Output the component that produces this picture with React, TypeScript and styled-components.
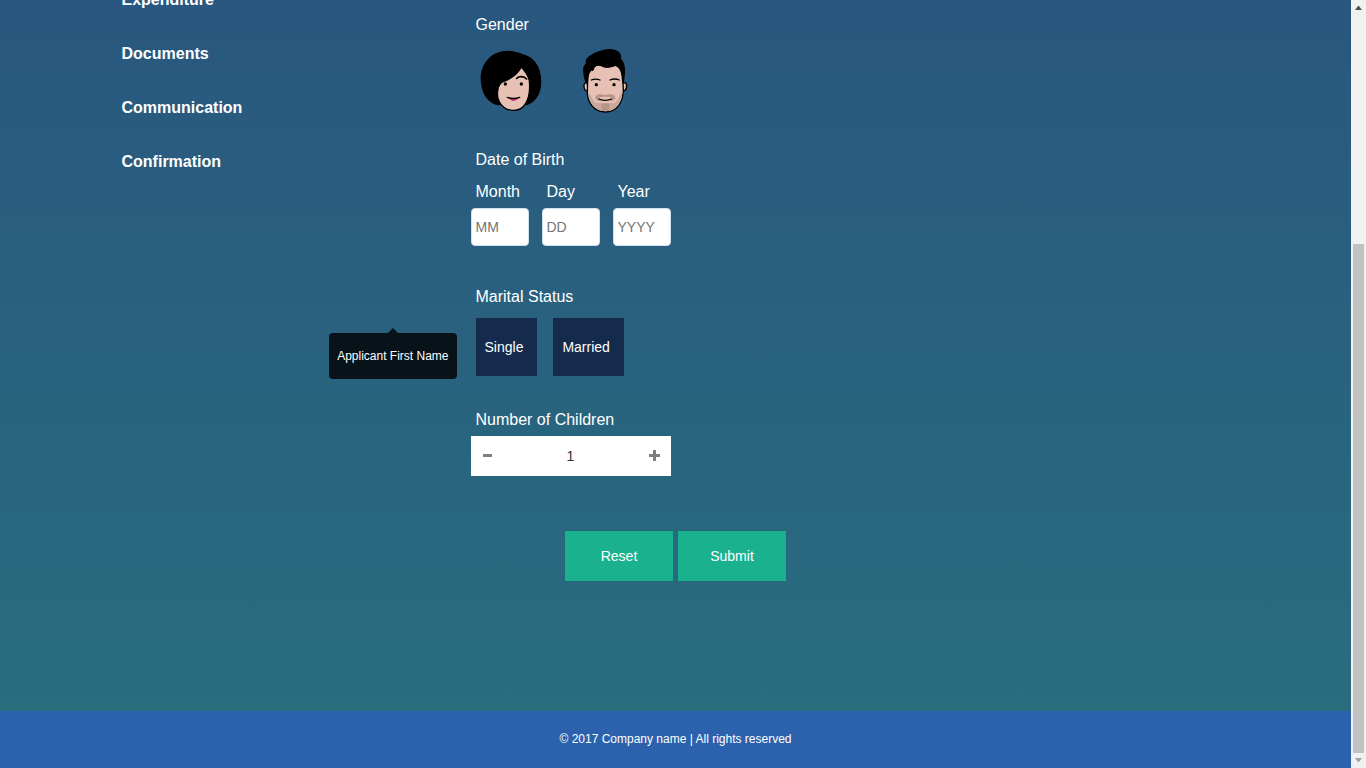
import React, { useState } from 'react';
import styled, { createGlobalStyle } from 'styled-components';

const GlobalStyle = createGlobalStyle`
  * { box-sizing: border-box; }
  body {
    margin: 0;
    overflow: hidden;
    font-family: "Liberation Sans", Arial, sans-serif;
    font-size: 14px;
    line-height: 20px;
    color: #fff;
  }
  button, input { font: inherit; }
`;

const Shell = styled.div`
  display: flex;
  height: 100vh;
`;

const Page = styled.div`
  flex: 1;
  display: flex;
  flex-direction: column;
  overflow: hidden;
  background: linear-gradient(#29577f, #296d7e 711px);
`;

const Main = styled.main`
  flex: 1;
`;

const Container = styled.div`
  display: flex;
  max-width: 1140px;
  margin: 0 auto;
`;

const Nav = styled.nav`
  width: 365px;
  padding-left: 16px;
  margin-top: -11px;
  display: flex;
  flex-direction: column;
  align-items: flex-start;
  gap: 32px;
`;

const NavLink = styled.a`
  color: #fff;
  font-size: 16px;
  font-weight: bold;
  line-height: 22px;
  text-decoration: none;
`;

const Form = styled.form`
  width: 200px;
  padding-top: 14px;
`;

const Group = styled.fieldset<{ $after?: number }>`
  position: relative;
  min-width: 0;
  margin: 0 0 ${(p) => p.$after ?? 0}px;
  padding: 0;
  border: 0;
`;

const Legend = styled.legend`
  padding: 0 5px;
  font-size: 16px;
  line-height: 22px;
`;

const Label = styled.label`
  display: block;
  padding: 0 5px;
  font-size: 16px;
  line-height: 22px;
`;

const Row = styled.div<{ $gap: number; $top: number; $inset?: boolean }>`
  display: flex;
  gap: ${(p) => p.$gap}px;
  margin-top: ${(p) => p.$top}px;
  padding-left: ${(p) => (p.$inset ? 5 : 0)}px;
`;

const HiddenRadio = styled.input`
  position: absolute;
  opacity: 0;
  width: 1px;
  height: 1px;
  margin: 0;
`;

const FaceChoice = styled.label`
  display: block;
  height: 72px;
  cursor: pointer;
  svg { display: block; width: 72px; height: 72px; }
`;

const DateField = styled.div`
  width: 58px;
`;

const DateInput = styled.input`
  display: block;
  width: 100%;
  height: 38px;
  margin-top: 5px;
  padding: 0 4px;
  border: 1px solid #cfe0ee;
  border-radius: 4px;
  background: #fff;
  color: #333;
  &::placeholder { color: #757575; }
`;

const StatusChoice = styled.label`
  padding: 19px 14px 19px 9px;
  background: #142b4d;
  cursor: pointer;
`;

const Tooltip = styled.div`
  position: absolute;
  top: 25px;
  right: calc(100% + 14px);
  padding: 13px 8px;
  border-radius: 4px;
  background: #071319;
  font-size: 12px;
  white-space: nowrap;
  &::before {
    content: "";
    position: absolute;
    left: 50%;
    bottom: 100%;
    margin-left: -5px;
    border: 5px solid transparent;
    border-top: 0;
    border-bottom-color: #071319;
  }
`;

const Stepper = styled.div`
  display: flex;
  align-items: center;
  height: 40px;
  margin-top: 5px;
  background: #fff;
`;

const StepButton = styled.button`
  display: flex;
  align-items: center;
  justify-content: center;
  width: 33px;
  height: 40px;
  padding: 0 0 2px;
  border: 0;
  background: none;
  color: #808080;
`;

const StepValue = styled.input`
  flex: 1;
  min-width: 0;
  height: 40px;
  padding: 0;
  border: 0;
  background: none;
  color: #333;
  text-align: center;
`;

const Actions = styled.div`
  display: flex;
  justify-content: center;
  gap: 5px;
  margin-top: 55px;
`;

const ActionButton = styled.button`
  width: 108px;
  height: 50px;
  border: 0;
  background: #1ab18f;
  color: #fff;
`;

const Footer = styled.footer`
  padding: 17px 0 18px;
  background: #2c62ad;
  font-size: 12px;
  line-height: 22px;
  text-align: center;
`;

const ScrollTrack = styled.div`
  display: flex;
  flex-direction: column;
  align-items: center;
  width: 15px;
  background: #f1f1f1;
`;

const ScrollArrow = styled.svg`
  display: block;
  width: 15px;
  height: 15px;
`;

const ScrollSpace = styled.div`
  flex: 229;
`;

const ScrollThumb = styled.div`
  flex: 509;
  width: 11px;
  background: #c1c1c1;
`;

const WomanFace = () => (
  <svg viewBox="3 0 216 216" aria-hidden="true">
    <path d="M96 17 C48 18 17 56 17 100 C17 142 38 178 72 181 L157 180 C185 170 199 142 199 110 C199 62 174 34 142 27 C128 20 112 17 96 17Z" fill="#000" />
    <path d="M139 66 C150 78 161 92 163 108 C166 138 162 162 149 180 C141 191 130 196 116 196 C100 196 87 190 78 178 C68 165 66 146 69 132 C71 120 76 113 86 109 C110 100 130 84 139 66Z" fill="#e7c2b4" stroke="#000" strokeWidth="4" />
    <path d="M125 100 C132 93 146 93 155 102" fill="none" stroke="#000" strokeWidth="5" strokeLinecap="round" />
    <circle cx="91" cy="117" r="5" />
    <circle cx="139" cy="117" r="5" />
    <path d="M101 159 Q115 160 130 159 Q124 168 115 168 Q106 167 101 159Z" fill="#d0246a" />
    <path d="M97 157 Q115 164 134 157" fill="none" stroke="#000" strokeWidth="4" strokeLinecap="round" />
  </svg>
);

const ManFace = () => (
  <svg viewBox="3 0 216 216" aria-hidden="true">
    <path d="M49 114 C39 110 39 138 53 138 M161 114 C173 108 173 137 159 138" fill="#e7c2b4" stroke="#000" strokeWidth="4" />
    <path d="M54 60 L156 60 L160 134 C159 174 139 201 106 201 C74 201 54 176 52 144Z" fill="#e7c2b4" stroke="#000" strokeWidth="4" />
    <path d="M55 142 C65 151 69 173 80 174 L132 174 C145 168 147 150 158 139 C155 176 138 198 106 199 C75 198 57 175 55 142Z" fill="#c9a99d" />
    <path d="M76 161 C77 145 91 146 105 150 C120 146 136 146 136 161 L127 168 L85 168Z" fill="#b79589" />
    <path d="M94 175 H118 V198 H94Z" fill="#b79589" />
    <path d="M84 158 Q105 153 127 158 Q105 173 84 158Z" fill="#e7c2b4" />
    <path d="M40 82 C37 68 43 61 48 55 C42 37 75 18 112 13 C137 9 158 23 153 41 C170 58 166 87 161 116 L156 111 C155 83 150 69 137 63 C119 69 108 72 91 63 C81 61 70 64 68 79 C64 72 55 85 54 113 L48 116 C44 103 40 96 40 82Z" fill="#000" />
    <path d="M78 62 Q71 67 69 77" fill="none" stroke="#000" strokeWidth="3" />
    <path d="M64 105 Q77 100 90 105 M120 105 Q134 99 148 105" fill="none" stroke="#000" strokeWidth="4" strokeLinecap="round" />
    <circle cx="79" cy="119" r="5" />
    <circle cx="132" cy="119" r="5" />
    <path d="M87 162 Q105 170 124 162" fill="none" stroke="#000" strokeWidth="4" strokeLinecap="round" />
  </svg>
);

const navItems = ['Expenditure', 'Documents', 'Communication', 'Confirmation'];
const dateParts = [
  { id: 'month', label: 'Month', hint: 'MM' },
  { id: 'day', label: 'Day', hint: 'DD' },
  { id: 'year', label: 'Year', hint: 'YYYY' },
];

export default function App() {
  const [children, setChildren] = useState(1);

  return (
    <Shell>
      <GlobalStyle />
      <Page>
        <Main>
          <Container>
            <Nav>
              {navItems.map((item) => (
                <NavLink key={item} href="#">{item}</NavLink>
              ))}
            </Nav>
            <Form id="applicant">
              <Group $after={32}>
                <Legend>Gender</Legend>
                <Row $gap={23} $top={9} $inset>
                  <FaceChoice>
                    <HiddenRadio type="radio" name="gender" aria-label="Female" />
                    <WomanFace />
                  </FaceChoice>
                  <FaceChoice>
                    <HiddenRadio type="radio" name="gender" aria-label="Male" />
                    <ManFace />
                  </FaceChoice>
                </Row>
              </Group>
              <Group $after={40}>
                <Legend>Date of Birth</Legend>
                <Row $gap={13} $top={10}>
                  {dateParts.map((part) => (
                    <DateField key={part.id}>
                      <Label htmlFor={part.id}>{part.label}</Label>
                      <DateInput id={part.id} placeholder={part.hint} />
                    </DateField>
                  ))}
                </Row>
              </Group>
              <Group $after={33}>
                <Legend>Marital Status</Legend>
                <Row $gap={16} $top={10} $inset>
                  <StatusChoice>
                    <HiddenRadio type="radio" name="status" />
                    Single
                  </StatusChoice>
                  <StatusChoice>
                    <HiddenRadio type="radio" name="status" />
                    Married
                  </StatusChoice>
                </Row>
                <Tooltip role="tooltip">Applicant First Name</Tooltip>
              </Group>
              <Label htmlFor="children">Number of Children</Label>
              <Stepper>
                <StepButton type="button" aria-label="Fewer" onClick={() => setChildren(Math.max(0, children - 1))}>
                  <svg width="9" height="3" aria-hidden="true"><path d="M0 0H9V3H0Z" fill="currentColor" /></svg>
                </StepButton>
                <StepValue id="children" value={children} readOnly />
                <StepButton type="button" aria-label="More" onClick={() => setChildren(children + 1)}>
                  <svg width="11" height="11" aria-hidden="true"><path d="M4 0H7V4H11V7H7V11H4V7H0V4H4Z" fill="currentColor" /></svg>
                </StepButton>
              </Stepper>
            </Form>
          </Container>
          <Actions>
            <ActionButton type="reset" form="applicant">Reset</ActionButton>
            <ActionButton type="submit" form="applicant">Submit</ActionButton>
          </Actions>
        </Main>
        <Footer>© 2017 Company name | All rights reserved</Footer>
      </Page>
      <ScrollTrack aria-hidden="true">
        <ScrollArrow viewBox="0 0 15 15"><path d="M4 10L7 6H8L11 10Z" fill="#505050" /></ScrollArrow>
        <ScrollSpace />
        <ScrollThumb />
        <ScrollArrow viewBox="0 0 15 15"><path d="M4 5L7 9H8L11 5Z" fill="#a3a3a3" /></ScrollArrow>
      </ScrollTrack>
    </Shell>
  );
}
